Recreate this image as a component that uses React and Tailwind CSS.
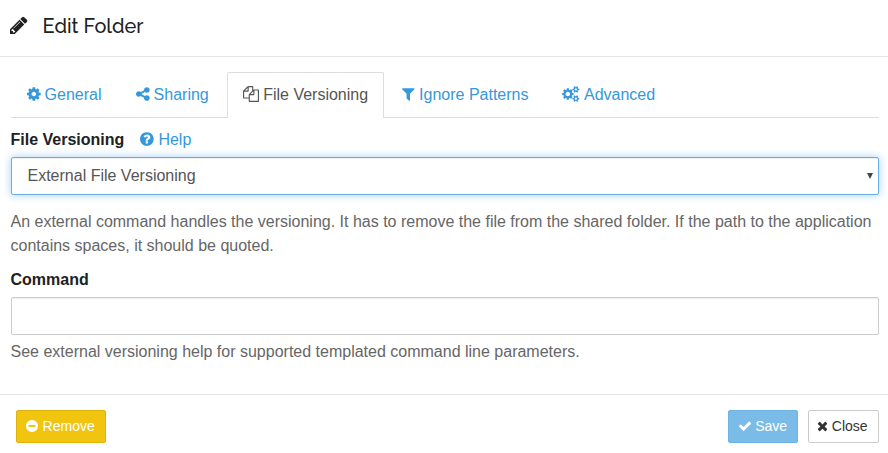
import React from "react";

const DISC =
  "m384 0q0 209-103 385.5t-279.5 279.5-385.5 103-385.5-103-279.5-279.5-103-385.5 103-385.5 279.5-279.5 385.5-103 385.5 103 279.5 279.5 103 385.5z";

const GEAR_TEETH =
  "v140q0 16-149 31-12 27-30 52 51 113 51 138 0 4-4 7-122 71-124 71-8 0-46-47t-52-68q-20 2-30 2t-30-2q-14 21-52 68t-46 47q-2 0-124-71-4-3-4-7 0-25 51-138-18-25-30-52-149-15-149-31v-140q0-16 149-31 13-29 30-52-51-113-51-138 0-4 4-7 4-2 35-20t59-34 30-16q8 0 46 46.5t52 67.5q20-2 30-2t30 2q51-71 92-112l6-2q4 0 124 70 4 3 4 7 0 25-51 138 17 23 30 52 149 15 149 31z";

// Each icon: [left edge, advance width, path] on a 1792-unit em.
const ICONS = {
  pencil: [128, 1536, "M491 1536l91-91-235-235-91 91v107h128v128h107zm523-928q0-22-22-22-10 0-17 7l-542 542q-7 7-7 17 0 22 22 22 10 0 17-7l542-542q7-7 7-17zm-54-192l416 416-832 832h-416v-416zm683 96q0 53-37 90l-166 166-416-416 166-165q36-38 90-38 53 0 91 38l235 234q37 39 37 91z"],
  cog: [128, 1536, "M1152 896q0-106-75-181t-181-75-181 75-75 181 75 181 181 75 181-75 75-181zm512-109v222q0 12-8 23t-20 13l-185 28q-19 54-39 91 35 50 107 138 10 12 10 25t-9 23q-27 37-99 108t-94 71q-12 0-26-9l-138-108q-44 23-91 38-16 136-29 186-7 28-36 28h-222q-14 0-24.5-8.5t-11.5-21.5l-28-184q-49-16-90-37l-141 107q-10 9-25 9-14 0-25-11-126-114-165-168-7-10-7-23 0-12 8-23 15-21 51-66.5t54-70.5q-27-50-41-99l-183-27q-13-2-21-12.5t-8-23.5v-222q0-12 8-23t19-13l186-28q14-46 39-92-40-57-107-138-10-12-10-24 0-10 9-23 26-36 98.5-107.5t94.5-71.5q13 0 26 10l138 107q44-23 91-38 16-136 29-186 7-28 36-28h222q14 0 24.5 8.5t11.5 21.5l28 184q49 16 90 37l142-107q9-9 24-9 13 0 25 10 129 119 165 170 7 8 7 22 0 12-8 23-15 21-51 66.5t-54 70.5q26 50 41 98l183 28q13 2 21 12.5t8 23.5z"],
  share: [128, 1536, "M1344 1024q133 0 226.5 93.5t93.5 226.5-93.5 226.5-226.5 93.5-226.5-93.5-93.5-226.5q0-12 2-34l-360-180q-92 86-218 86-133 0-226.5-93.5t-93.5-226.5 93.5-226.5 226.5-93.5q126 0 218 86l360-180q-2-22-2-34 0-133 93.5-226.5t226.5-93.5 226.5 93.5 93.5 226.5-93.5 226.5-226.5 93.5q-126 0-218-86l-360 180q2 22 2 34t-2 34l360 180q92-86 218-86z"],
  files: [0, 1792, "M1696 384q40 0 68 28t28 68v1216q0 40-28 68t-68 28h-960q-40 0-68-28t-28-68v-288h-544q-40 0-68-28t-28-68v-672q0-40 20-88t48-76l408-408q28-28 76-48t88-20h416q40 0 68 28t28 68v328q68-40 128-40h416zm-544 213l-299 299h299v-299zm-640-384l-299 299h299v-299zm196 647l316-316v-416h-384v416q0 40-28 68t-68 28h-416v640h512v-256q0-40 20-88t48-76zm956 804v-1152h-384v416q0 40-28 68t-68 28h-416v640h896z"],
  filter: [192, 1408, "M1595 295q17 41-14 70l-493 493v742q0 42-39 59-13 5-25 5-27 0-45-19l-256-256q-19-19-19-45v-486l-493-493q-31-29-14-70 17-39 59-39h1280q42 0 59 39z"],
  cogs: [-80, 1920, "M832 896q0-106-75-181t-181-75-181 75-75 181 75 181 181 75 181-75 75-181zm768 512q0-52-38-90t-90-38-90 38-38 90q0 53 37.5 90.5t90.5 37.5 90.5-37.5 37.5-90.5zm0-1024q0-52-38-90t-90-38-90 38-38 90q0 53 37.5 90.5t90.5 37.5 90.5-37.5 37.5-90.5zm-384 421v185q0 10-7 19.5t-16 10.5l-155 24q-11 35-32 76 34 48 90 115 7 11 7 20 0 12-7 19-23 30-82.5 89.5t-78.5 59.5q-11 0-21-7l-115-90q-37 19-77 31-11 108-23 155-7 24-30 24h-186q-11 0-20-7.5t-10-17.5l-23-153q-34-10-75-31l-118 89q-7 7-20 7-11 0-21-8-144-133-144-160 0-9 7-19 10-14 41-53t47-61q-23-44-35-82l-152-24q-10-1-17-9.5t-7-19.5v-185q0-10 7-19.5t16-10.5l155-24q11-35 32-76-34-48-90-115-7-11-7-20 0-12 7-20 22-30 82-89t79-59q11 0 21 7l115 90q34-18 77-32 11-108 23-154 7-24 30-24h186q11 0 20 7.5t10 17.5l23 153q34 10 75 31l118-89q8-7 20-7 11 0 21 8 144 133 144 160 0 8-7 19-12 16-42 54t-45 60q23 48 34 82l152 23q10 2 17 10.5t7 19.5zm640 533" + GEAR_TEETH + "m0-1024" + GEAR_TEETH],
  question: [128, 1536, "M1024 1376v-192q0-14-9-23t-23-9h-192q-14 0-23 9t-9 23v192q0 14 9 23t23 9h192q14 0 23-9t9-23zm256-672q0-88-55.5-163t-138.5-116-170-41q-243 0-371 213-15 24 8 42l132 100q7 6 19 6 16 0 25-12 53-68 86-92 34-24 86-24 48 0 85.5 26t37.5 59q0 38-20 61t-68 45q-63 28-115.5 86.5t-52.5 125.5v36q0 14 9 23t23 9h192q14 0 23-9t9-23q0-19 21.5-49.5t54.5-49.5q32-18 49-28.5t46-35 44.5-48 28-60.5 12.5-81zM1280 896" + DISC],
  minus: [128, 1536, "M1344 960v-128q0-26-19-45t-45-19h-768q-26 0-45 19t-19 45v128q0 26 19 45t45 19h768q26 0 45-19t19-45zM1280 896" + DISC],
  check: [0, 1792, "M1671 566q0 40-28 68l-724 724-136 136q-28 28-68 28t-68-28l-136-136-362-362q-28-28-28-68t28-68l136-136q28-28 68-28t68 28l294 295 656-657q28-28 68-28t68 28l136 136q28 28 28 68z"],
  times: [192, 1408, "M1490 1322q0 40-28 68l-136 136q-28 28-68 28t-68-28l-294-294-294 294q-28 28-68 28t-68-28l-136-136q-28-28-28-68t28-68l294-294-294-294q-28-28-28-68t28-68l136-136q28-28 68-28t68 28l294 294 294-294q28-28 68-28t68 28l136 136q28 28 28 68t-28 68l-294 294 294 294q28 28 28 68z"],
};

function Icon({ name, className = "mb-[2px]" }) {
  const [left, width, d] = ICONS[name];
  return (
    <svg
      className={`block h-[1em] shrink-0 overflow-visible fill-current ${className}`}
      style={{ width: `${width / 1792}em` }}
      viewBox={`${left} 0 ${width} 1792`}
      aria-hidden="true"
    >
      <path d={d} />
    </svg>
  );
}

const TABS = [
  { icon: "cog", label: "General" },
  { icon: "share", label: "Sharing" },
  { icon: "files", label: "File Versioning", active: true },
  { icon: "filter", label: "Ignore Patterns" },
  { icon: "cogs", label: "Advanced" },
];

function Tab({ icon, label, active }) {
  return (
    <li
      className={
        active
          ? "-mb-px mr-0.5 flex h-[46px] items-center gap-[4.4px] rounded-t-xs border border-b-0 border-[#ddd] bg-white px-[15px] pb-px text-[#555]"
          : "-mb-px mr-0.5 flex h-[46px] items-center gap-[4.4px] px-4 text-[#3498db]"
      }
    >
      <Icon name={icon} />
      <span>{label}</span>
    </li>
  );
}

function Button({ icon, label, className }) {
  return (
    <button
      className={`flex h-[33px] items-center rounded-xs border pb-px text-sm whitespace-nowrap ${className}`}
    >
      <Icon name={icon} className="mb-px" />
      <span>{label}</span>
    </button>
  );
}

export default function App() {
  return (
    <div className="flex h-[453px] w-[888px] flex-col overflow-hidden bg-white font-['Liberation_Sans',Arial,sans-serif] text-base leading-6 text-[#212121]">
      <header className="flex h-[57px] shrink-0 items-center border-b border-[#e5e5e5] pb-1 pl-2.5">
        <span className="text-[20.5px]">
          <Icon name="pencil" className="mb-px" />
        </span>
        <h4 className="ml-[15px] font-['Raleway',Lato,sans-serif] text-[19.9px] font-medium">Edit Folder</h4>
      </header>

      <main className="flex h-[337px] shrink-0 flex-col pt-[15px] pr-[9px] pl-[10.5px]">
        <ul className="flex h-[46px] shrink-0 border-b border-[#ddd]">
          {TABS.map((tab) => (
            <Tab key={tab.label} {...tab} />
          ))}
        </ul>

        <div className="mt-[10px] flex items-center">
          <label className="font-bold">File Versioning</label>
          <a className="ml-[15.8px] flex items-center gap-[4.6px] text-[#3498db]">
            <Icon name="question" />
            <span>Help</span>
          </a>
        </div>
        <div className="mt-[5px] flex h-[38px] shrink-0 items-center justify-between rounded-xs border border-[#66afe9] pr-[5px] pl-4 text-[#555] shadow-[inset_0_1px_1px_rgba(0,0,0,0.075),0_0_8px_rgba(102,175,233,0.6)]">
          <span>External File Versioning</span>
          <svg className="h-[6px] w-[6px] fill-[#444]" viewBox="0 0 6 6" aria-hidden="true">
            <path d="M0 0h6L3 6z" />
          </svg>
        </div>
        <p className="mt-[15px] text-[#666]">
          An external command handles the versioning. It has to remove the file from the shared folder. If the path to
          the application contains spaces, it should be quoted.
        </p>
        <label className="mt-[10px] font-bold">Command</label>
        <input className="mt-[5px] h-[38px] shrink-0 rounded-xs border border-[#ccc] px-4 shadow-[inset_0_1px_1px_rgba(0,0,0,0.075)]" />
        <p className="mt-[5px] text-[#666]">See external versioning help for supported templated command line parameters.</p>
      </main>

      <footer className="flex items-start gap-2.5 border-t border-[#e5e5e5] pt-[15px] pr-[9px] pl-4">
        <Button icon="minus" label="Remove" className="mr-auto w-[90px] gap-[4.4px] border-[#deb20c] bg-[#f1c40f] pl-[9.2px] text-white" />
        <Button icon="check" label="Save" className="w-[70px] gap-[3.2px] border-[#6cb4e2] bg-[#7bbbe7] pl-[9px] text-white" />
        <Button icon="times" label="Close" className="w-[71px] gap-[3.6px] border-[#ccc] bg-white pl-[8.2px] text-[#333]" />
      </footer>
    </div>
  );
}
